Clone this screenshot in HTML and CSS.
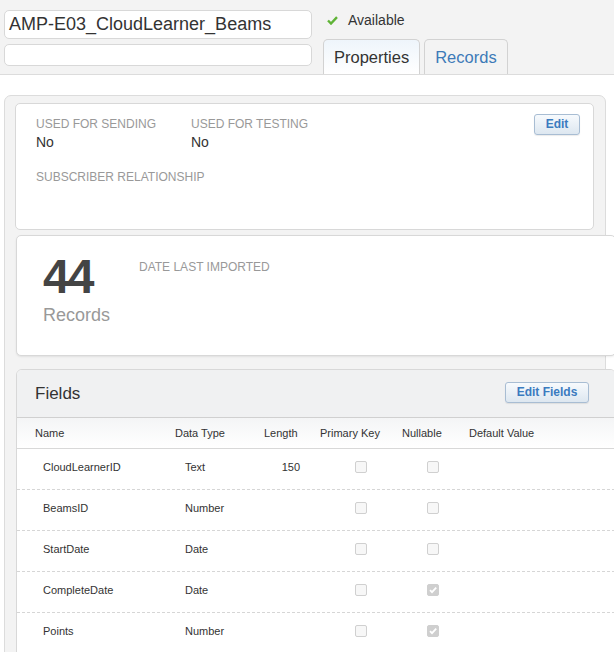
FILE: index.html
```html
<!DOCTYPE html>
<html>
<head>
<meta charset="utf-8">
<link rel="stylesheet" href="styles.css">
</head>
<body>
<div class="header">
  <div class="name-col">
    <div class="name-input">AMP-E03_CloudLearner_Beams</div>
    <div class="desc-input"></div>
  </div>
  <div class="right-col">
    <div class="status">
      <svg class="check" width="11" height="9" viewBox="0 0 11 9"><path d="M1 4.5 L4 7.5 L10 1.2" fill="none" stroke="#5fb336" stroke-width="2.4" stroke-linejoin="miter"/></svg>
      <span>Available</span>
    </div>
    <div class="tabs">
      <div class="tab active">Properties</div>
      <div class="tab">Records</div>
    </div>
  </div>
</div>
<div class="content">
  <div class="panel">
    <div class="card props">
      <div class="props-body">
        <div class="prop-row">
          <div class="prop prop-w">
            <div class="label">USED FOR SENDING</div>
            <div class="value">No</div>
          </div>
          <div class="prop">
            <div class="label">USED FOR TESTING</div>
            <div class="value">No</div>
          </div>
        </div>
        <div class="label sub">SUBSCRIBER RELATIONSHIP</div>
      </div>
      <div class="btn edit">Edit</div>
    </div>
    <div class="card wide stats">
      <div class="count">
        <div class="num">44</div>
        <div class="num-label">Records</div>
      </div>
      <div class="label">DATE LAST IMPORTED</div>
    </div>
    <div class="card wide fields">
      <div class="fields-head">
        <div class="fields-title">Fields</div>
        <div class="btn edit-fields">Edit Fields</div>
      </div>
      <div class="grid thead">
        <div>Name</div><div>Data Type</div><div>Length</div><div>Primary Key</div><div>Nullable</div><div>Default Value</div>
      </div>
      <div class="grid row">
        <div class="c-name">CloudLearnerID</div><div class="c-type">Text</div><div class="c-len">150</div><div class="c-pk"><span class="cb"></span></div><div class="c-nl"><span class="cb"></span></div><div></div>
      </div>
      <div class="grid row">
        <div class="c-name">BeamsID</div><div class="c-type">Number</div><div class="c-len"></div><div class="c-pk"><span class="cb"></span></div><div class="c-nl"><span class="cb"></span></div><div></div>
      </div>
      <div class="grid row">
        <div class="c-name">StartDate</div><div class="c-type">Date</div><div class="c-len"></div><div class="c-pk"><span class="cb"></span></div><div class="c-nl"><span class="cb"></span></div><div></div>
      </div>
      <div class="grid row">
        <div class="c-name">CompleteDate</div><div class="c-type">Date</div><div class="c-len"></div><div class="c-pk"><span class="cb"></span></div><div class="c-nl"><span class="cb on"><svg width="12" height="12" viewBox="0 0 12 12"><path d="M3 6.2 L5 8.2 L9.2 3.6" fill="none" stroke="#fff" stroke-width="1.8"/></svg></span></div><div></div>
      </div>
      <div class="grid row">
        <div class="c-name">Points</div><div class="c-type">Number</div><div class="c-len"></div><div class="c-pk"><span class="cb"></span></div><div class="c-nl"><span class="cb on"><svg width="12" height="12" viewBox="0 0 12 12"><path d="M3 6.2 L5 8.2 L9.2 3.6" fill="none" stroke="#fff" stroke-width="1.8"/></svg></span></div><div></div>
      </div>
    </div>
  </div>
</div>
</body>
</html>
```
FILE: styles.css
```css
html, body {
  margin: 0;
  padding: 0;
  overflow: hidden;
  height: 652px;
  background: #fff;
  font-family: "Liberation Sans", Arial, sans-serif;
  color: #333;
}
.header {
  background: #f3f3f3;
  border-bottom: 1px solid #dcdcdc;
  display: flex;
  padding: 10px 0 0 4px;
  height: 64px;
}
.name-col {
  width: 308px;
  display: flex;
  flex-direction: column;
  gap: 5px;
}
.name-input {
  height: 29px;
  box-sizing: border-box;
  background: #fff;
  border: 1px solid #d8d8d8;
  border-radius: 5px;
  font-size: 18px;
  line-height: 27px;
  padding-left: 4px;
  color: #333;
}
.desc-input {
  height: 22px;
  box-sizing: border-box;
  background: #fff;
  border: 1px solid #d8d8d8;
  border-radius: 5px;
}
.right-col {
  margin-left: 11px;
  display: flex;
  flex-direction: column;
}
.status {
  display: flex;
  align-items: center;
  height: 20px;
  padding-left: 4px;
  font-size: 14px;
  color: #333;
}
.check {
  margin-right: 10px;
}
.tabs {
  display: flex;
  gap: 4px;
  margin-top: 9px;
}
.tab {
  height: 35px;
  box-sizing: border-box;
  border: 1px solid #d2d2d2;
  border-bottom: none;
  border-radius: 5px 5px 0 0;
  font-size: 16.5px;
  line-height: 34px;
  padding: 0 10px;
  color: #3d7ab8;
  background: #f3f3f3;
}
.tab.active {
  color: #333;
  background: linear-gradient(#eef5fb, #ffffff);
}
.content {
  padding: 20px 8px 0 4px;
}
.panel {
  background: #f3f3f3;
  border: 1px solid #dcdcdc;
  border-radius: 7px;
  padding: 7px 11px 0 10px;
  height: 600px;
}
.card {
  background: #fff;
  border: 1px solid #d8d8d8;
  border-radius: 5px;
}
.props {
  height: 127px;
  box-sizing: border-box;
  display: flex;
  justify-content: space-between;
  align-items: flex-start;
  padding: 13px 13px 0 20px;
}
.prop-row {
  display: flex;
}
.prop-w {
  width: 155px;
}
.label {
  font-size: 12px;
  color: #999;
  line-height: 14px;
}
.value {
  font-size: 14px;
  line-height: 16px;
  margin-top: 3px;
  color: #333;
}
.sub {
  margin-top: 20px;
}
.btn {
  box-sizing: border-box;
  height: 21px;
  border: 1px solid #a8bdd3;
  border-radius: 3px;
  background: linear-gradient(#f7fafd, #dde7f0);
  color: #3b7bbf;
  font-weight: bold;
  font-size: 12px;
  line-height: 19px;
  text-align: center;
  box-shadow: 0 1px 1px rgba(0,0,0,0.08);
}
.edit {
  width: 46px;
  margin-top: -3px;
}
.wide {
  margin-left: 1px;
  margin-right: -22px;
}
.stats {
  margin-top: 5px;
  height: 121px;
  box-sizing: border-box;
  display: flex;
  align-items: flex-start;
  padding: 17px 0 0 26px;
  box-shadow: 0 1px 2px rgba(0,0,0,0.08);
}
.count {
  width: 96px;
}
.num {
  font-size: 48px;
  font-weight: bold;
  line-height: 48px;
  color: #444;
  letter-spacing: -2px;
}
.num-label {
  font-size: 18px;
  color: #999;
  line-height: 20px;
  margin-top: 4px;
}
.stats .label {
  margin-top: 7px;
}
.fields {
  margin-top: 13px;
  overflow: hidden;
  border-radius: 6px 6px 0 0;
}
.fields-head {
  height: 47px;
  background: #f0f1f2;
  display: flex;
  align-items: center;
  justify-content: space-between;
  padding: 0 26px 0 18px;
  border-bottom: 1px solid #d0d0d0;
}
.fields-title {
  font-size: 17px;
  color: #333;
}
.edit-fields {
  width: 84px;
  margin-top: -2px;
}
.grid {
  display: grid;
  grid-template-columns: 140px 89px 56px 82px 67px 1fr;
  padding-left: 18px;
  align-items: center;
}
.thead {
  height: 31px;
  background: linear-gradient(#f4f5f6, #ffffff);
  border-bottom: 1px solid #d8d8d8;
  font-size: 11px;
  color: #333;
  padding-bottom: 1px;
  box-sizing: border-box;
}
.row {
  border-bottom: 1px dashed #d6d6d6;
  font-size: 11px;
  color: #333;
  padding-bottom: 5px;
  height: 35px;
}
.c-name { padding-left: 8px; }
.c-type { padding-left: 10px; }
.c-len { text-align: right; padding-right: 20px; }
.c-pk { padding-left: 35px; }
.c-nl { padding-left: 25px; }
.cb {
  display: block;
  width: 12px;
  height: 12px;
  box-sizing: border-box;
  border: 1px solid #d0d0d0;
  border-radius: 2px;
  background: #f7f7f7;
}
.cb.on {
  background: #cfcfcf;
  border-color: #cfcfcf;
  position: relative;
}
.cb.on svg {
  position: absolute;
  left: -1px;
  top: -1px;
}
```
